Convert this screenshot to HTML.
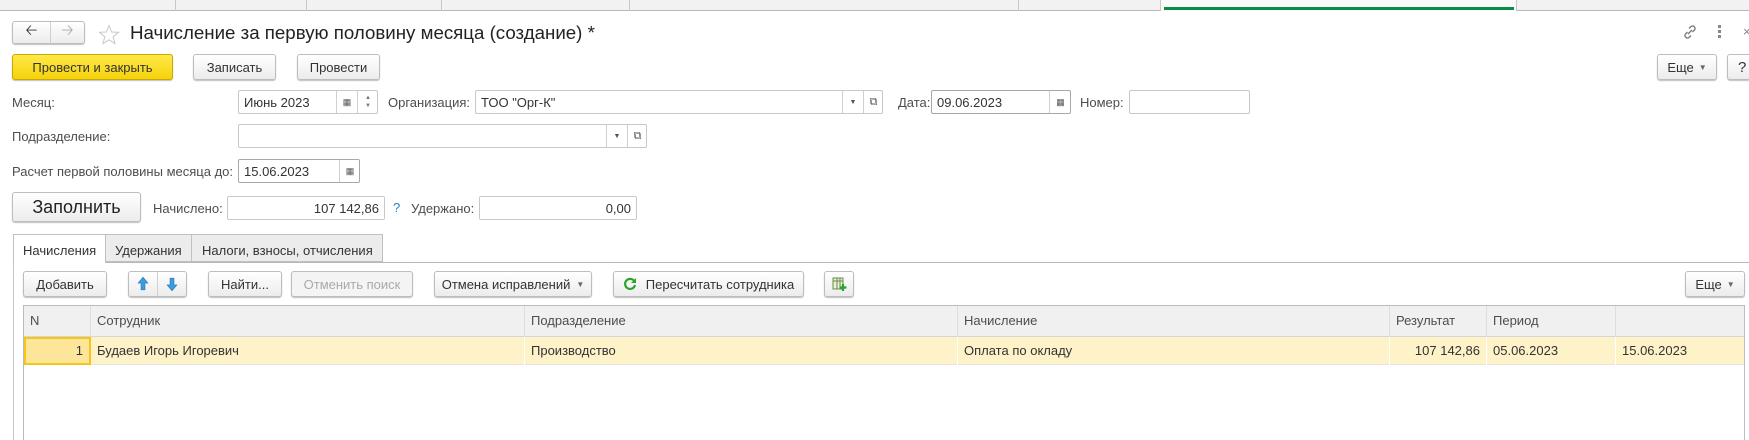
<!DOCTYPE html>
<html><head><meta charset="utf-8"><style>
*{box-sizing:border-box;margin:0;padding:0}
html,body{width:1749px;height:440px;overflow:hidden}
body{background:#fff;font-family:"Liberation Sans",Arial,sans-serif;font-size:13px;color:#333;position:relative}
.a{position:absolute}
.btn{position:absolute;border:1px solid #bdbdbd;border-radius:3px;background:linear-gradient(#fff,#ececec);box-shadow:0 1px 1px rgba(0,0,0,.25);display:flex;align-items:center;justify-content:center;color:#333;font-size:13px}
.fld{position:absolute;border:1px solid #c8c8c8;border-radius:2px;background:#fff;font-size:13px;color:#333;display:flex;align-items:center;padding-left:5px}
.lbl{position:absolute;color:#4d4d4d;font-size:13px}
.cal{position:absolute;top:0;height:100%;border-left:1px solid #d0d0d0;display:flex;align-items:center;justify-content:center;font-size:9px;color:#555}
.th{position:absolute;top:0;height:30px;line-height:30px;padding-left:6px;border-right:1px solid #ddd;color:#4d4d4d}
.td{position:absolute;top:0;height:28px;line-height:28px;padding-left:6px;border-right:1px solid #fff;color:#333}
</style></head><body>
<div class="a" style="left:0;top:0;width:1749px;height:11px;background:#f2f2f2;border-bottom:1px solid #b8b8b8"></div>
<div class="a" style="left:175px;top:0;width:1px;height:11px;background:#c8c8c8"></div>
<div class="a" style="left:306px;top:0;width:1px;height:11px;background:#c8c8c8"></div>
<div class="a" style="left:441px;top:0;width:1px;height:11px;background:#c8c8c8"></div>
<div class="a" style="left:629px;top:0;width:1px;height:11px;background:#c8c8c8"></div>
<div class="a" style="left:1018px;top:0;width:1px;height:11px;background:#c8c8c8"></div>
<div class="a" style="left:1160px;top:0;width:357px;height:11px;background:#fafafa;border-left:1px solid #c8c8c8;border-right:1px solid #c8c8c8"></div>
<div class="a" style="left:1164px;top:7px;width:350px;height:3px;background:#0a8c45"></div>

<div class="btn" style="left:12px;top:21px;width:73px;height:23px;padding:0"><span style="width:38px;text-align:center;font-size:15px;color:#333">&#129120;</span><span style="width:1px;height:100%;background:#d0d0d0"></span><span style="width:34px;text-align:center;font-size:15px;color:#aaa">&#129122;</span></div>
<svg class="a" style="left:98px;top:24px" width="22" height="22" viewBox="0 0 22 22"><polygon points="11,1.5 13.6,8 20.5,8.3 15.2,12.7 17,19.6 11,15.8 5,19.6 6.8,12.7 1.5,8.3 8.4,8" fill="none" stroke="#c8c8c8" stroke-width="1"/></svg>
<div class="a" style="left:130px;top:22px;font-size:18.7px;color:#222">Начисление за первую половину месяца (создание) *</div>
<svg class="a" style="left:1682px;top:24px" width="16" height="16" viewBox="0 0 16 16"><g fill="none" stroke="#777" stroke-width="1.3"><path d="M7 4.5l2-2a2.5 2.5 0 0 1 3.5 3.5l-2 2"/><path d="M9 11.5l-2 2a2.5 2.5 0 0 1-3.5-3.5l2-2"/><path d="M6 10l4-4"/></g></svg>
<div class="a" style="left:1718px;top:25px;width:3px"><div style="width:3px;height:3px;background:#888;margin-bottom:2px"></div><div style="width:3px;height:3px;background:#888;margin-bottom:2px"></div><div style="width:3px;height:3px;background:#888"></div></div>
<div class="a" style="left:1743px;top:24px;color:#888;font-size:13px">×</div>

<div class="btn" style="left:12px;top:54px;width:161px;height:26px;background:linear-gradient(#ffe94a,#f5d20a);border-color:#c9a800;color:#333">Провести и закрыть</div>
<div class="btn" style="left:193px;top:54px;width:83px;height:26px">Записать</div>
<div class="btn" style="left:297px;top:54px;width:83px;height:26px">Провести</div>
<div class="btn" style="left:1657px;top:54px;width:60px;height:26px">Еще <span style="font-size:8px;margin-left:5px;color:#666">▼</span></div>
<div class="btn" style="left:1727px;top:54px;width:22px;height:26px;justify-content:flex-start;padding-left:10px;font-size:15px;border-right:none;border-radius:3px 0 0 3px">?</div>

<div class="lbl" style="left:12px;top:95px">Месяц:</div>
<div class="fld" style="left:238px;top:90px;width:140px;height:24px">Июнь 2023
 <div class="cal" style="left:97px;width:21px">&#9638;</div>
 <div class="cal" style="left:118px;width:21px;flex-direction:column;font-size:6px;line-height:8px;color:#777">▲<br>▼</div></div>
<div class="lbl" style="left:388px;top:95px">Организация:</div>
<div class="fld" style="left:475px;top:90px;width:408px;height:24px">ТОО "Орг-К"
 <div class="cal" style="left:366px;width:21px;font-size:7px">▼</div>
 <div class="cal" style="left:387px;width:20px;font-size:11px">&#10697;</div></div>
<div class="lbl" style="left:898px;top:95px">Дата:</div>
<div class="fld" style="left:931px;top:90px;width:140px;height:24px;border-color:#a8a8a8">09.06.2023
 <div class="cal" style="left:117px;width:22px">&#9638;</div></div>
<div class="lbl" style="left:1080px;top:95px">Номер:</div>
<div class="fld" style="left:1129px;top:90px;width:121px;height:24px"></div>

<div class="lbl" style="left:12px;top:129px">Подразделение:</div>
<div class="fld" style="left:238px;top:124px;width:409px;height:24px">
 <div class="cal" style="left:367px;width:21px;font-size:7px">▼</div>
 <div class="cal" style="left:388px;width:20px;font-size:11px">&#10697;</div></div>

<div class="lbl" style="left:12px;top:164px">Расчет первой половины месяца до:</div>
<div class="fld" style="left:238px;top:159px;width:122px;height:24px;border-color:#a8a8a8">15.06.2023
 <div class="cal" style="left:100px;width:21px">&#9638;</div></div>

<div class="btn" style="left:12px;top:192px;width:129px;height:30px;font-size:18px;color:#222">Заполнить</div>
<div class="lbl" style="left:153px;top:201px">Начислено:</div>
<div class="fld" style="left:227px;top:196px;width:158px;height:24px;justify-content:flex-end;padding-right:5px">107 142,86</div>
<div class="a" style="left:393px;top:200px;color:#2a7fc7;font-size:13px">?</div>
<div class="lbl" style="left:411px;top:201px">Удержано:</div>
<div class="fld" style="left:479px;top:196px;width:158px;height:24px;justify-content:flex-end;padding-right:5px">0,00</div>

<div class="a" style="left:13px;top:262px;width:1736px;height:1px;background:#b8b8b8"></div>
<div class="a" style="left:13px;top:262px;width:1px;height:178px;background:#c8c8c8"></div>
<div class="a" style="left:13px;top:234px;width:93px;height:29px;background:#fff;border:1px solid #c0c0c0;border-bottom:none;padding:8px 0 0 9px;color:#333">Начисления</div>
<div class="a" style="left:106px;top:234px;width:86px;height:28px;background:#ececec;border:1px solid #c0c0c0;border-left:none;padding:8px 0 0 9px;color:#333">Удержания</div>
<div class="a" style="left:192px;top:234px;width:191px;height:28px;background:#ececec;border:1px solid #c0c0c0;border-left:none;padding:8px 0 0 10px;color:#333">Налоги, взносы, отчисления</div>

<div class="btn" style="left:23px;top:271px;width:84px;height:26px">Добавить</div>
<div class="btn" style="left:128px;top:271px;width:59px;height:26px;padding:0">
 <svg width="29" height="24" viewBox="0 0 29 24"><path d="M14.5 5l5 6h-3v7h-4v-7h-3z" fill="#3d9be0" stroke="#2a78b8" stroke-width=".7"/></svg><span style="width:1px;height:100%;background:#d0d0d0"></span>
 <svg width="29" height="24" viewBox="0 0 29 24"><path d="M14.5 19l5-6h-3V6h-4v7h-3z" fill="#3d9be0" stroke="#2a78b8" stroke-width=".7"/></svg></div>
<div class="btn" style="left:208px;top:271px;width:74px;height:26px">Найти...</div>
<div class="btn" style="left:291px;top:271px;width:122px;height:26px;color:#aaa;background:#f4f4f4">Отменить поиск</div>
<div class="btn" style="left:434px;top:271px;width:158px;height:26px">Отмена исправлений <span style="font-size:8px;margin-left:6px;color:#666">▼</span></div>
<div class="btn" style="left:613px;top:271px;width:191px;height:26px"><svg width="14" height="14" viewBox="0 0 14 14" style="margin-right:9px"><path d="M11.5 4.5A5 5 0 1 0 12 8" fill="none" stroke="#2aa52a" stroke-width="2.2"/><path d="M13 1v5H8z" fill="#2aa52a"/></svg>Пересчитать сотрудника</div>
<div class="btn" style="left:824px;top:271px;width:30px;height:26px"><svg width="16" height="16" viewBox="0 0 16 16"><rect x="2" y="2" width="10" height="11" fill="#e8f0d8" stroke="#6a8a4a"/><path d="M2 5h10M6 2v11M9 2v11" stroke="#6a8a4a"/><path d="M12 8v7M8.5 11.5h7" stroke="#2aa52a" stroke-width="2.2"/></svg></div>
<div class="btn" style="left:1685px;top:271px;width:60px;height:26px">Еще <span style="font-size:8px;margin-left:5px;color:#666">▼</span></div>

<div class="a" style="left:23px;top:305px;width:1722px;height:135px;border:1px solid #bcbcbc;border-bottom:none;background:#fff;overflow:hidden">
 <div class="a" style="left:0;top:0;width:1720px;height:31px;background:#f0f0f0;border-bottom:1px solid #d6d6d6">
  <div class="th" style="left:0;width:67px">N</div>
  <div class="th" style="left:67px;width:434px">Сотрудник</div>
  <div class="th" style="left:501px;width:433px">Подразделение</div>
  <div class="th" style="left:934px;width:432px">Начисление</div>
  <div class="th" style="left:1366px;width:97px">Результат</div>
  <div class="th" style="left:1463px;width:129px">Период</div>
  <div class="th" style="left:1592px;width:128px;border-right:none"></div>
 </div>
 <div class="a" style="left:0;top:31px;width:1720px;height:28px;background:#fdf2c8;border-bottom:1px solid #e4e4e4">
  <div class="td" style="left:0;width:67px;background:#fde59a;border:2px solid #f5c518;text-align:right;padding-right:6px;line-height:24px">1</div>
  <div class="td" style="left:67px;width:434px">Будаев Игорь Игоревич</div>
  <div class="td" style="left:501px;width:433px">Производство</div>
  <div class="td" style="left:934px;width:432px">Оплата по окладу</div>
  <div class="td" style="left:1366px;width:97px;text-align:right;padding-right:6px">107 142,86</div>
  <div class="td" style="left:1463px;width:129px">05.06.2023</div>
  <div class="td" style="left:1592px;width:128px;border-right:none">15.06.2023</div>
 </div>
</div>
</body></html>
